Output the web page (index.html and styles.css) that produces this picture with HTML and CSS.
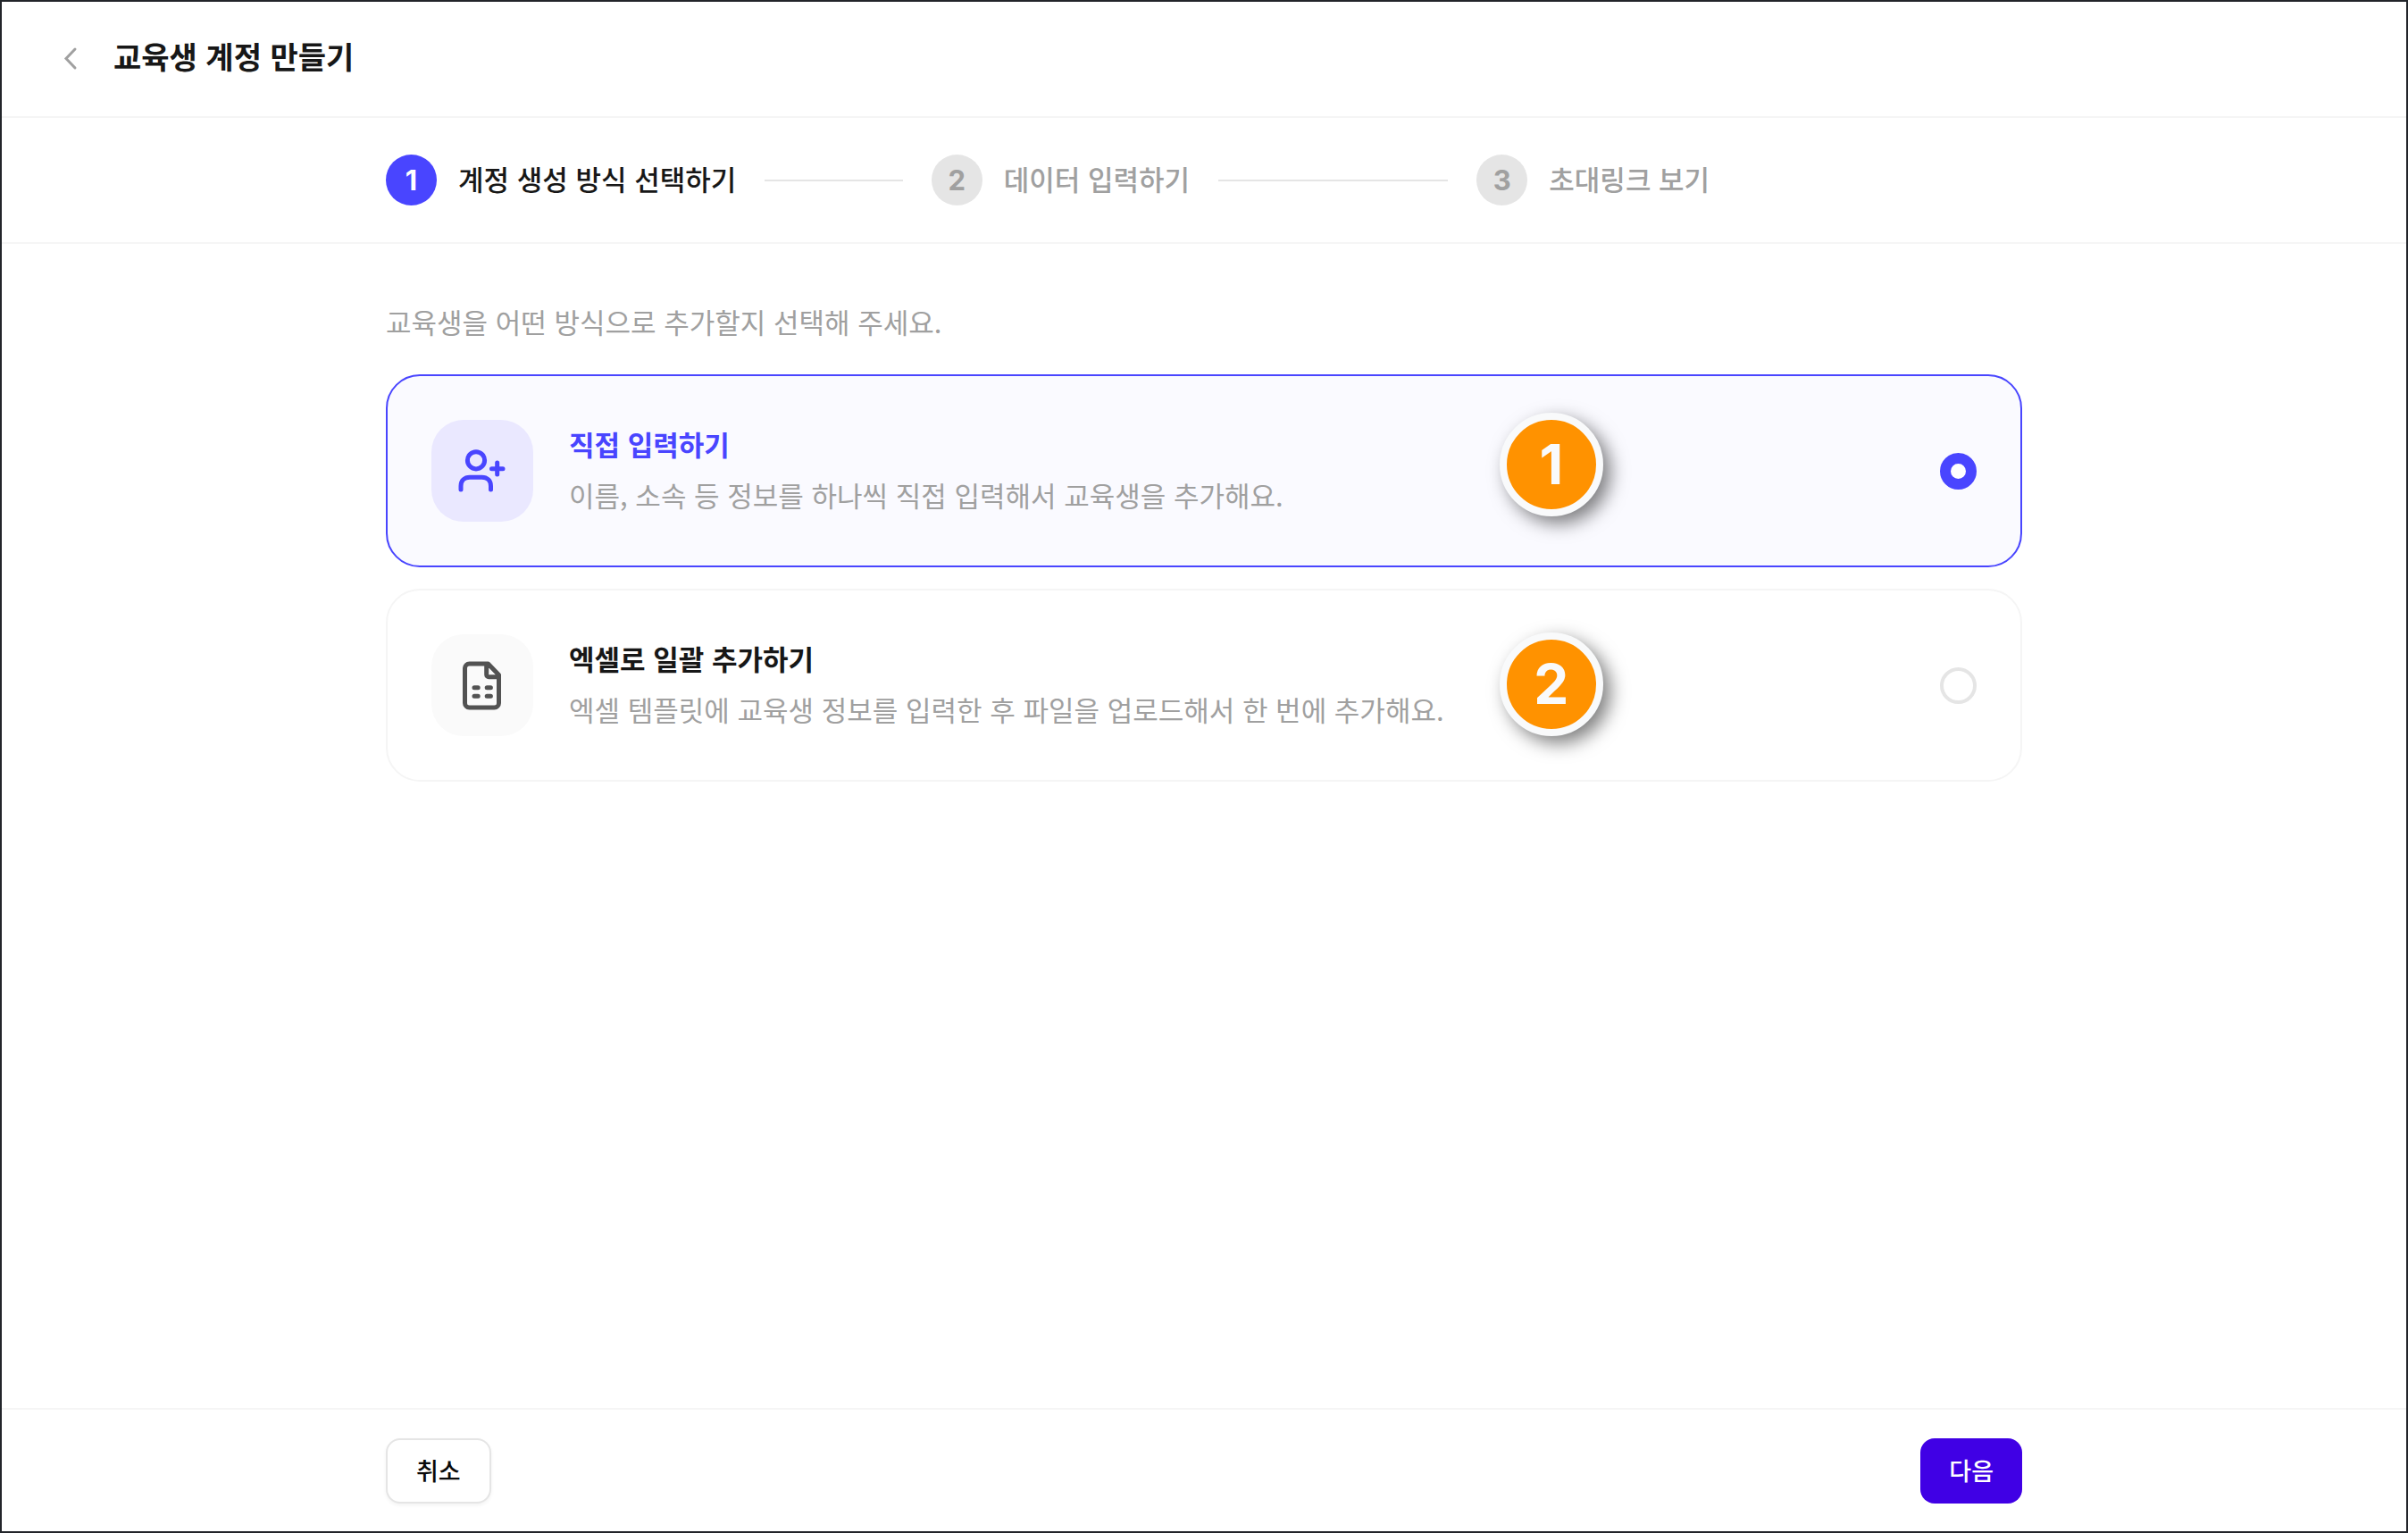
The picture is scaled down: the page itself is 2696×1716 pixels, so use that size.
FILE: index.html
```html
<!DOCTYPE html>
<html lang="ko">
<head>
<meta charset="utf-8">
<meta name="viewport" content="width=device-width, initial-scale=1">
<title>교육생 계정 만들기</title>
<link rel="stylesheet" href="styles.css">
</head>
<body>
<form class="page">
  <header class="header">
    <button class="back" type="button" aria-label="뒤로">
      <svg class="back-icon" viewBox="0 0 32 32" aria-hidden="true"><path d="M21 6 11 16.500 21 27"/></svg>
    </button>
    <h1 class="title">교육생 계정 만들기</h1>
  </header>

  <nav class="steps-bar">
    <ol class="container steps">
      <li class="step step-current" aria-current="step"><span class="step-number">1</span><span class="step-label">계정 생성 방식 선택하기</span></li>
      <li class="step"><span class="step-number">2</span><span class="step-label">데이터 입력하기</span></li>
      <li class="step"><span class="step-number">3</span><span class="step-label">초대링크 보기</span></li>
    </ol>
  </nav>

  <main class="container content">
    <p class="intro" id="intro">교육생을 어떤 방식으로 추가할지 선택해 주세요.</p>
    <div class="options" role="radiogroup" aria-labelledby="intro">
      <label class="option">
        <span class="tile">
          <svg class="tile-icon" viewBox="0 0 60 60" aria-hidden="true">
            <circle cx="23" cy="18.300" r="9.600"/>
            <path d="M6 51v-4c0-6 4-9.800 10-9.800h13.500c6 0 10 3.800 10 9.800v4M40.500 27.700H53M46.700 21v13"/>
          </svg>
        </span>
        <span class="option-text">
          <span class="option-title">직접 입력하기</span>
          <span class="option-desc">이름, 소속 등 정보를 하나씩 직접 입력해서 교육생을 추가해요.</span>
        </span>
        <input class="radio" type="radio" name="method" checked>
        <span class="marker">1</span>
      </label>
      <label class="option">
        <span class="tile">
          <svg class="tile-icon" viewBox="0 0 60 60" aria-hidden="true">
            <path d="M36.500 6H15.500a5 5 0 0 0-5 5v39a5 5 0 0 0 5 5h28a5 5 0 0 0 5-5V18.500zM34.700 6.500v11.700a2.500 2.500 0 0 0 2.500 2.500h10.800M21 32.800h4.200M35.200 32.800h4.200M21 42.300h4.200M35.200 42.300h4.200"/>
          </svg>
        </span>
        <span class="option-text">
          <span class="option-title">엑셀로 일괄 추가하기</span>
          <span class="option-desc">엑셀 템플릿에 교육생 정보를 입력한 후 파일을 업로드해서 한 번에 추가해요.</span>
        </span>
        <input class="radio" type="radio" name="method">
        <span class="marker">2</span>
      </label>
    </div>
  </main>

  <footer class="footer">
    <div class="container actions">
      <button class="button button-outline" type="button">취소</button>
      <button class="button button-primary" type="submit">다음</button>
    </div>
  </footer>
</form>
</body>
</html>
```
FILE: styles.css
```css
* {
  box-sizing: border-box;
}

body {
  margin: 0;
  color: #171717;
  background: #fff;
  font-family: "Noto Sans CJK KR", sans-serif;
  font-size: 31px;
  line-height: 48px;
}

.page {
  display: flex;
  flex-direction: column;
  min-height: 100vh;
  border: 2px solid #22252a;
}

.container {
  width: 100%;
  max-width: 1832px;
  margin: 0 auto;
}

.header {
  display: flex;
  align-items: center;
  gap: 32px;
  padding: 37px 61px 39px;
  border-bottom: 2px solid #f5f5f5;
}

.back {
  display: flex;
  padding: 0;
  border: 0;
  background: none;
  cursor: pointer;
}

.back-icon {
  width: 32px;
  height: 32px;
  fill: none;
  stroke: #a0a0a0;
  stroke-width: 3;
  stroke-linecap: round;
}

.title {
  margin: 0;
  padding-bottom: 4px;
  font-size: 34px;
  font-weight: 700;
  line-height: 48px;
}

.steps-bar {
  border-bottom: 2px solid #f5f5f5;
}

.steps {
  display: grid;
  grid-template-columns: repeat(3, 1fr);
  padding: 41px 0;
  list-style: none;
}

.step {
  display: flex;
  align-items: center;
  color: #a0a0a0;
  font-weight: 500;
}

.step-current {
  color: #171717;
}

.step-label {
  padding-bottom: 4px;
}

.step-number {
  display: grid;
  place-items: center;
  width: 57px;
  height: 57px;
  margin-right: 24px;
  border-radius: 50%;
  background: #e5e5e5;
  font-family: Inter, sans-serif;
  font-weight: 700;
}

.step-current .step-number {
  color: #fff;
  background: #4945ff;
}

.step:not(:last-child)::after {
  content: "";
  flex: 1;
  height: 2px;
  margin: 0 32px;
  background: #e5e5e5;
}

.content {
  flex: 1;
  padding: 63px 0;
}

.intro {
  margin: 0 0 35px;
  color: #a0a0a0;
}

.options {
  display: grid;
  gap: 24px;
}

.option {
  position: relative;
  display: flex;
  align-items: center;
  gap: 40px;
  padding: 49px;
  border: 2px solid #f5f5f5;
  border-radius: 38px;
  cursor: pointer;
}

.option:has(:checked) {
  border-color: #4945ff;
  background: #fafaff;
}

.tile {
  display: grid;
  place-items: center;
  width: 114px;
  height: 114px;
  border-radius: 36px;
  background: #fafafa;
}

.option:has(:checked) .tile {
  background: #eae8ff;
}

.tile-icon {
  width: 60px;
  height: 60px;
  fill: none;
  stroke: #525252;
  stroke-width: 5;
  stroke-linecap: round;
  stroke-linejoin: round;
}

.option:has(:checked) .tile-icon {
  stroke: #4945ff;
}

.option-text {
  display: flex;
  flex: 1;
  flex-direction: column;
  gap: 9px;
  padding-bottom: 4px;
}

.option-title {
  font-weight: 700;
}

.option:has(:checked) .option-title {
  color: #4945ff;
}

.option-desc {
  color: #a0a0a0;
}

.radio {
  appearance: none;
  width: 41px;
  height: 41px;
  margin: 0;
  border: 4px solid #e5e5e5;
  border-radius: 50%;
  background: #fff;
}

.radio:checked {
  border: 12px solid #4945ff;
}

.marker {
  position: absolute;
  top: 41px;
  left: 68.1%;
  display: grid;
  place-items: center;
  width: 116px;
  height: 116px;
  border: 8px solid #f9fafb;
  border-radius: 50%;
  color: #f9fafb;
  background: #ff9200;
  box-shadow: 8px 8px 20px rgba(0, 0, 0, 0.5);
  font-family: Inter, sans-serif;
  font-size: 62px;
  font-weight: 700;
  line-height: 64px;
}

.option + .option .marker {
  top: 47px;
}

.footer {
  border-top: 2px solid #f5f5f5;
}

.actions {
  display: flex;
  justify-content: space-between;
  padding: 32px 0 31px;
}

.button {
  padding: 12px 32px 13px;
  border: 0;
  border-radius: 16px;
  font-family: inherit;
  font-size: 27px;
  font-weight: 500;
  line-height: 48px;
  cursor: pointer;
}

.button-outline {
  padding: 10px 32px 11px;
  border: 2px solid #e5e5e5;
  color: #0a0a0a;
  background: #fff;
  box-shadow: 0 2px 4px rgba(0, 0, 0, 0.05);
}

.button-primary {
  color: #fff;
  background: #4000e5;
}
```
